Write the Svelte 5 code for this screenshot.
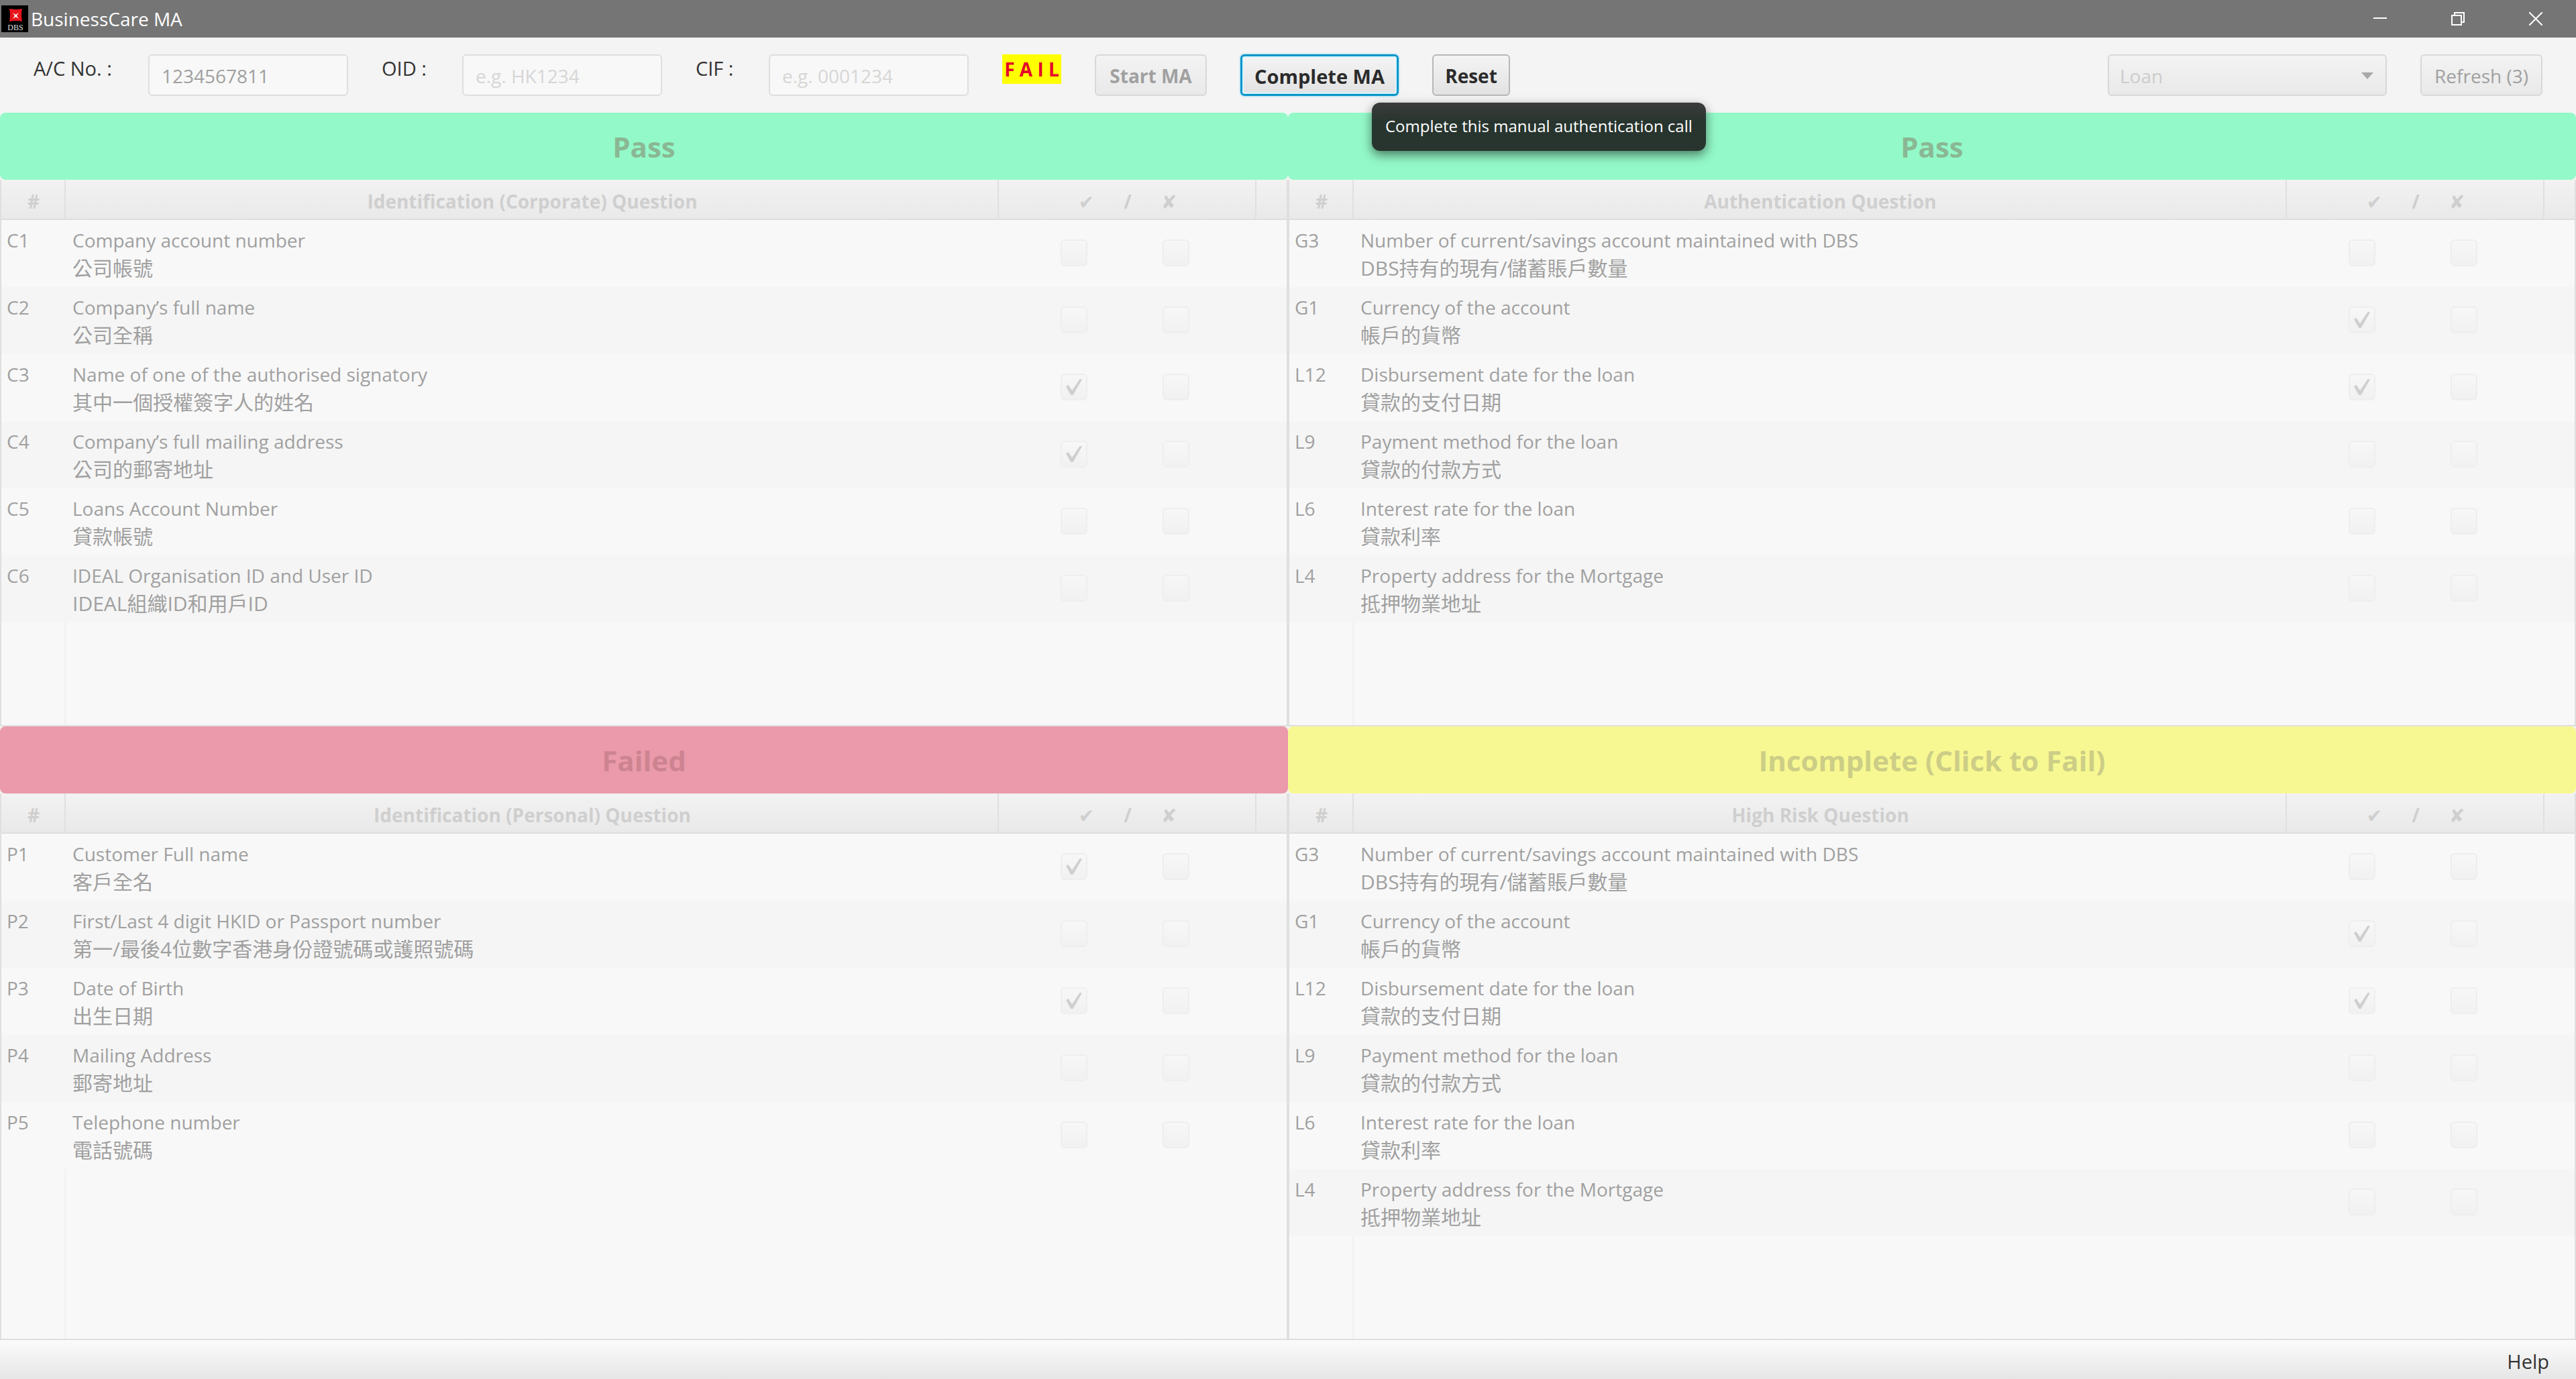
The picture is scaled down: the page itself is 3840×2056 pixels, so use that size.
<script>
  const copy = {
    G3: ['Number of current/savings account maintained with DBS', 'DBS持有的現有/儲蓄賬戶數量'],
    G1: ['Currency of the account', '帳戶的貨幣'],
    L12: ['Disbursement date for the loan', '貸款的支付日期'],
    L9: ['Payment method for the loan', '貸款的付款方式'],
    L6: ['Interest rate for the loan', '貸款利率'],
    L4: ['Property address for the Mortgage', '抵押物業地址'],
    C1: ['Company account number', '公司帳號'],
    C2: ['Company’s full name', '公司全稱'],
    C3: ['Name of one of the authorised signatory', '其中一個授權簽字人的姓名'],
    C4: ['Company’s full mailing address', '公司的郵寄地址'],
    C5: ['Loans Account Number', '貸款帳號'],
    C6: ['IDEAL Organisation ID and User ID', 'IDEAL組織ID和用戶ID'],
    P1: ['Customer Full name', '客戶全名'],
    P2: ['First/Last 4 digit HKID or Passport number', '第一/最後4位數字香港身份證號碼或護照號碼'],
    P3: ['Date of Birth', '出生日期'],
    P4: ['Mailing Address', '郵寄地址'],
    P5: ['Telephone number', '電話號碼'],
  };
  const panels = [
    { status: 'Pass', tone: 'pass', title: 'Identification (Corporate) Question', ids: ['C1', 'C2', 'C3', 'C4', 'C5', 'C6'], ticked: ['C3', 'C4'] },
    { status: 'Pass', tone: 'pass', title: 'Authentication Question', ids: ['G3', 'G1', 'L12', 'L9', 'L6', 'L4'], ticked: ['G1', 'L12'] },
    { status: 'Failed', tone: 'failed', title: 'Identification (Personal) Question', ids: ['P1', 'P2', 'P3', 'P4', 'P5'], ticked: ['P1', 'P3'] },
    { status: 'Incomplete (Click to Fail)', tone: 'incomplete', title: 'High Risk Question', ids: ['G3', 'G1', 'L12', 'L9', 'L6', 'L4'], ticked: ['G1', 'L12'] },
  ];
</script>

<div class="window">
  <header class="titlebar">
    <svg class="logo" viewBox="0 0 40 40" aria-hidden="true">
      <rect width="40" height="40" fill="#000" />
      <path d="M12 5q10 2 19 0-2 9 0 19-9-2-19 0 2-10 0-19z" fill="#e8141c" />
      <path d="M17 11l4.500 3 4.500-3-3 4.500 3 4.500-4.500-3-4.500 3 3-4.500z" fill="#fff" />
      <text x="21" y="37" text-anchor="middle">DBS</text>
    </svg>
    <h1>BusinessCare MA</h1>
    <div class="caption">
      <button aria-label="Minimise"><svg viewBox="0 0 20 20"><path d="M0 9h20" /></svg></button>
      <button aria-label="Restore"><svg viewBox="0 0 20 20"><path d="M1 5h14v14H1zM5 5V1h14v14h-4" /></svg></button>
      <button aria-label="Close"><svg viewBox="0 0 20 20"><path d="M0 0l20 20M20 0L0 20" /></svg></button>
    </div>
  </header>

  <div class="toolbar">
    <label class="l-ac" for="ac">A/C No. :</label>
    <input id="ac" type="text" value="1234567811" disabled />
    <label class="l-oid" for="oid">OID :</label>
    <input id="oid" type="text" placeholder="e.g. HK1234" disabled />
    <label class="l-cif" for="cif">CIF :</label>
    <input id="cif" type="text" placeholder="e.g. 0001234" disabled />
    <strong class="verdict">F A I L</strong>
    <button class="btn start" disabled>Start MA</button>
    <div class="anchor">
      <button class="btn complete" aria-describedby="tip">Complete MA</button>
      <div class="tooltip" id="tip" role="tooltip">Complete this manual authentication call</div>
    </div>
    <button class="btn reset">Reset</button>
    <div class="product">
      <select aria-label="Product" disabled><option>Loan</option></select>
      <svg viewBox="0 0 18 10" aria-hidden="true"><path d="M0 0h18l-9 10z" /></svg>
    </div>
    <button class="btn refresh" disabled>Refresh (3)</button>
  </div>

  <main class="panels">
    {#each panels as panel}
      <section class="panel">
        <button class="status {panel.tone}" disabled>{panel.status}</button>
        <div class="body">
          <table>
            <colgroup>
              <col class="c-id" /><col /><col class="c-marks" /><col class="c-end" />
            </colgroup>
            <thead>
              <tr>
                <th>#</th>
                <th>{panel.title}</th>
                <th><span class="marks"><span>✔</span><span>/</span><span>✘</span></span></th>
                <th aria-label="Spacer"></th>
              </tr>
            </thead>
            <tbody>
              {#each panel.ids as id}
                <tr>
                  <td>{id}</td>
                  <td>{copy[id][0]}<br /><span class="zh" lang="zh-Hant">{copy[id][1]}</span></td>
                  <td>
                    <span class="checks">
                      <input type="checkbox" aria-label="{id} correct" checked={panel.ticked.includes(id)} disabled />
                      <input type="checkbox" aria-label="{id} wrong" disabled />
                    </span>
                  </td>
                  <td></td>
                </tr>
              {/each}
            </tbody>
          </table>
          <div class="rest"></div>
        </div>
      </section>
    {/each}
  </main>

  <footer><a href="#help">Help</a></footer>
</div>

<style>
  :global(body) { background: #f4f4f4; }
  .window, .window :is(button, input, select) {
    font-family: "Open Sans", "Noto Sans CJK TC", sans-serif;
    font-size: 28px;
  }
  .window {
    box-sizing: border-box;
    min-height: 100vh;
    display: flex;
    flex-direction: column;
    color: #333;
    background: #f4f4f4;
  }
  .titlebar {
    display: flex;
    align-items: center;
    height: 56px;
    padding: 0 2px;
    background: #757575;
    color: #fff;
  }
  .logo { width: 40px; height: 40px; }
  .logo text { font: 12px "Liberation Serif", serif; fill: #ddd; }
  h1 { margin: 0 0 0 4px; font-size: 28px; font-weight: 400; line-height: 40px; }
  .caption { display: flex; margin-left: auto; }
  .caption button {
    width: 116px;
    height: 56px;
    padding: 0;
    border: 0;
    background: none;
    display: grid;
    place-items: center;
  }
  .caption svg { width: 20px; height: 20px; fill: none; stroke: #fff; stroke-width: 2; }

  .toolbar {
    display: flex;
    align-items: flex-start;
    height: 62px;
    padding: 25px 50px;
  }
  .toolbar label { font-size: 29px; line-height: 42px; white-space: nowrap; }
  .l-ac { width: 171px; }
  .l-oid, .l-cif { margin-left: 50px; }
  .l-oid { width: 120px; }
  .l-cif { width: 109px; }
  .toolbar input {
    box-sizing: border-box;
    width: 298px;
    height: 62px;
    padding: 2px 18px 0;
    border: 2px solid #dedede;
    border-radius: 6px;
    background: #f8f8f8;
    color: #a0a0a0;
  }
  .toolbar input::placeholder { color: #d6d6d6; opacity: 1; }
  .verdict {
    width: 88px;
    margin-left: 50px;
    line-height: 44px;
    text-align: center;
    white-space: nowrap;
    background: #ff0;
    color: #e4002b;
  }
  .btn, select {
    box-sizing: border-box;
    height: 62px;
    padding: 2px 0 0;
    border: 2px solid #b8b8b8;
    border-radius: 6px;
    background: linear-gradient(#f4f4f4, #e2e2e2);
    color: #2b2b2b;
    white-space: nowrap;
  }
  .btn { font-weight: 700; margin-left: 50px; }
  .btn:disabled, select:disabled {
    border-color: #d8d8d8;
    background: linear-gradient(#f3f3f3, #e9e9e9);
    color: #a0a0a0;
    opacity: 1;
  }
  .start { width: 167px; }
  .anchor { position: relative; margin-left: 50px; }
  .anchor .complete {
    width: 236px;
    margin: 0;
    border: 3px solid #0a96c9;
    box-shadow: 0 0 3px #4fc3ea, inset 0 0 0 2px #d5f5ff;
    font-size: 29px;
  }
  .reset { width: 116px; }
  .tooltip {
    position: absolute;
    z-index: 2;
    top: 72px;
    left: 196px;
    box-sizing: border-box;
    height: 72px;
    padding: 0 20px;
    border-radius: 12px;
    background: linear-gradient(#3b3b3b, #28352f 40%, #28352f);
    box-shadow: 0 6px 16px rgba(0, 0, 0, 0.5);
    color: #fff;
    font-size: 24px;
    line-height: 70px;
    white-space: nowrap;
  }
  .product { position: relative; margin-left: auto; }
  select { width: 416px; padding: 2px 16px 0; appearance: none; }
  .product select:disabled { color: #ccc; }
  .product svg { position: absolute; right: 20px; top: 27px; width: 18px; height: 10px; fill: #a8a8a8; }
  .refresh { width: 182px; font-weight: 400; }

  .panels {
    flex: 1;
    display: grid;
    grid-template-columns: 1fr 1fr;
    grid-template-rows: 1fr 1fr;
  }
  .panel { display: flex; flex-direction: column; min-width: 0; }
  .status {
    height: 100px;
    padding: 0;
    border: 0;
    border-radius: 8px;
  }
  .panel .status { font-size: 42px; font-weight: 700; }
  .pass { background: #93f9c8; color: #8ab794; }
  .failed { background: #ea9aaa; color: #cd8491; }
  .incomplete { background: #f7f892; color: #cccd86; }
  .body {
    flex: 1;
    display: flex;
    flex-direction: column;
    border: solid #dfdfdf;
    border-width: 0 2px 2px;
    background: #f8f8f8;
  }
  table { width: 100%; table-layout: fixed; border-collapse: separate; border-spacing: 0; }
  .c-id { width: 96px; }
  .c-marks { width: 384px; }
  .c-end { width: 45px; }
  th {
    box-sizing: border-box;
    height: 60px;
    padding: 6px 0 0 2px;
    border-right: 2px solid #e0e0e0;
    border-bottom: 2px solid #dedede;
    background: linear-gradient(#f3f2f2, #e9e9e9);
    color: #cfcfcf;
    font-size: 28px;
    line-height: 40px;
  }
  th:last-child { border-right: 0; }
  .marks { display: flex; justify-content: center; gap: 44px; font-family: "Open Sans", "DejaVu Sans", sans-serif; }
  td {
    box-sizing: border-box;
    height: 100px;
    padding: 9px 8px 5px;
    vertical-align: top;
    line-height: 42px;
    color: #a0a0a0;
    white-space: nowrap;
  }
  td:nth-child(2) { padding-left: 10px; }
  .zh { font-size: 30px; }
  tr:nth-child(even) td { background: #f5f5f5; }
  .checks { display: flex; gap: 112px; padding: 20px 0 0 84px; }
  .checks input {
    appearance: none;
    box-sizing: border-box;
    width: 40px;
    height: 40px;
    margin: 0;
    border: 2px solid #eeeeee;
    border-radius: 6px;
    background: linear-gradient(#f7f7f7, #f1f1f1);
    display: grid;
    place-items: center;
  }
  .checks input:checked::before {
    content: "";
    width: 24px;
    height: 24px;
    background: #cfcfcf;
    clip-path: polygon(0 46%, 14% 38%, 38% 72%, 86% 0, 100% 2%, 44% 100%, 30% 100%);
  }
  .rest { flex: 1; width: 96px; box-sizing: border-box; border-right: 2px solid #f1f1f1; }

  footer {
    display: flex;
    justify-content: flex-end;
    height: 58px;
    padding-right: 40px;
    background: linear-gradient(#fbfbfb, #e6e6e6);
  }
  footer a { color: #333; font-size: 29px; line-height: 64px; text-decoration: none; }
</style>
